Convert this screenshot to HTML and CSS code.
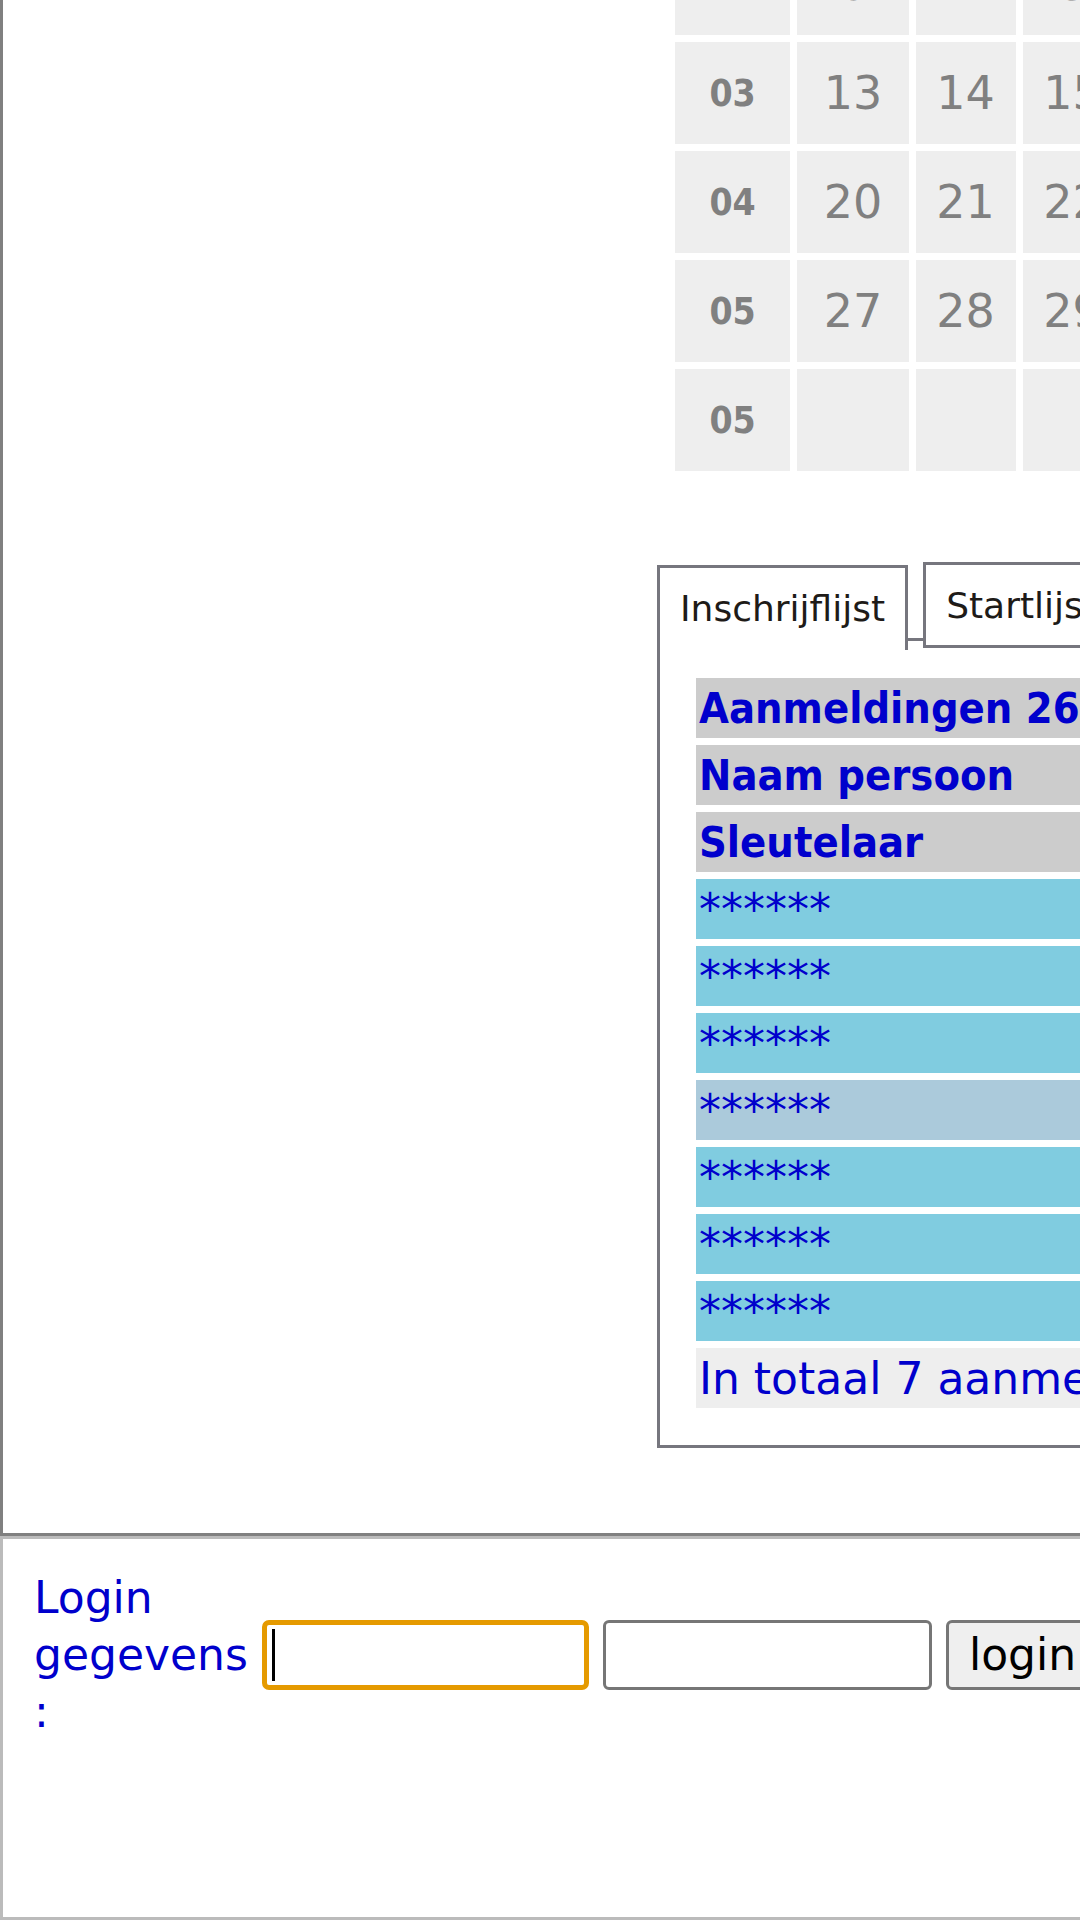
FILE: index.html
```html
<!DOCTYPE html>
<html lang="nl">
<head>
<meta charset="utf-8">
<title>Inschrijflijst</title>
<link rel="stylesheet" href="styles.css">
</head>
<body>
<div class="page">
  <div class="main">
    <div class="side"></div>
    <div class="content">
      <table class="cal">
        <colgroup>
          <col class="c-wk"><col class="c-d1"><col class="c-d"><col class="c-d"><col class="c-d"><col class="c-d"><col class="c-d"><col class="c-d">
        </colgroup>
        <tbody>
          <tr><td class="wk">02</td><td>6</td><td>7</td><td>8</td><td>9</td><td>10</td><td>11</td><td>12</td></tr>
          <tr><td class="wk">03</td><td>13</td><td>14</td><td>15</td><td>16</td><td>17</td><td>18</td><td>19</td></tr>
          <tr><td class="wk">04</td><td>20</td><td>21</td><td>22</td><td>23</td><td>24</td><td>25</td><td>26</td></tr>
          <tr><td class="wk">05</td><td>27</td><td>28</td><td>29</td><td>30</td><td>31</td><td></td><td></td></tr>
          <tr><td class="wk">05</td><td></td><td></td><td></td><td></td><td></td><td></td><td></td></tr>
        </tbody>
      </table>

      <div class="tabbox">
        <div class="tabs">
          <div class="tab active">Inschrijflijst</div>
          <div class="tab">Startlijst</div>
        </div>
        <div class="panel">
          <div class="row head">Aanmeldingen 26</div>
          <div class="row head">Naam persoon</div>
          <div class="row head">Sleutelaar</div>
          <div class="row entry">******</div>
          <div class="row entry">******</div>
          <div class="row entry">******</div>
          <div class="row entry alt">******</div>
          <div class="row entry">******</div>
          <div class="row entry">******</div>
          <div class="row entry">******</div>
          <div class="row total">In totaal 7 aanmeldingen</div>
        </div>
      </div>
    </div>
  </div>

  <div class="login">
    <form class="login-row">
      <div class="lbl">Login gegevens :</div>
      <div class="field">
        <input class="inp focus" type="text" aria-label="gebruikersnaam">
        <span class="caret"></span>
      </div>
      <input class="inp second" type="password" aria-label="wachtwoord">
      <button class="btn" type="button">login</button>
    </form>
  </div>
</div>
</body>
</html>
```

FILE: styles.css
```css
html, body {
  margin: 0;
  padding: 0;
  overflow: hidden;
  background: #fff;
}

body {
  font-family: "DejaVu Sans", Verdana, sans-serif;
  width: 1080px;
  height: 1920px;
}

.page {
  display: flex;
  flex-direction: column;
  width: 1500px;
  height: 1920px;
}

/* ---------- top area ---------- */
.main {
  flex: none;
  display: flex;
  height: 1536px;
  box-sizing: border-box;
  border-left: 3px solid #808080;
  border-bottom: 3px solid #808080;
}

.side {
  flex: none;
  width: 654px;
}

.content {
  flex: 1;
  display: flex;
  flex-direction: column;
  align-items: flex-start;
}

/* calendar */
.cal {
  margin-top: -74px;
  margin-left: 11px;
  border-collapse: separate;
  border-spacing: 7px;
}

.c-wk { width: 117px; }
.c-d1 { width: 113px; }
.c-d { width: 101px; }

.cal td {
  height: 102px;
  padding: 0;
  background: #eeeeee;
  color: #808080;
  font-size: 46px;
  text-align: center;
  vertical-align: middle;
}

.cal td.wk {
  font-family: "DejaVu Sans Condensed", "DejaVu Sans", sans-serif;
  font-stretch: condensed;
  font-weight: bold;
  font-size: 37px;
}

/* tabs */
.tabbox {
  margin-top: 84px;
  width: 900px;
}

.tabs {
  position: relative;
  z-index: 1;
  display: flex;
  align-items: flex-start;
  gap: 15px;
  margin-bottom: -12px;
}

.tab {
  background: #fff;
  border: 3px solid #76767e;
  color: #1e1b18;
  font-size: 36px;
  line-height: 42px;
  padding: 20px 20px 18px;
  white-space: nowrap;
}

.tab.active {
  margin-top: 3px;
  border-bottom: none;
  padding-bottom: 20px;
}

.panel {
  border: 3px solid #76767e;
  padding: 37px 36px;
  display: flex;
  flex-direction: column;
  gap: 7px;
}

.row {
  height: 60px;
  display: flex;
  align-items: center;
  padding-left: 3px;
  color: #0000cc;
  font-size: 44px;
  white-space: nowrap;
}

.row.head {
  background: #cccccc;
  font-family: "DejaVu Sans Condensed", "DejaVu Sans", sans-serif;
  font-stretch: condensed;
  font-weight: bold;
  font-size: 43px;
}

.row.entry {
  background: #80cce0;
}

.row.entry.alt {
  background: #abcadb;
}

.row.total {
  background: #eeeeee;
}

/* ---------- login area ---------- */
.login {
  flex: 1;
  box-sizing: border-box;
  border: 3px solid #bbbbbb;
  border-right: none;
  padding: 30px 31px;
}

.login-row {
  margin: 0;
  display: flex;
  align-items: center;
  gap: 14px;
}

.lbl {
  width: min-content;
  color: #0000cc;
  font-size: 44px;
  line-height: 57px;
}

.field {
  position: relative;
}

.inp {
  display: block;
  box-sizing: border-box;
  width: 327px;
  height: 70px;
  margin: 0;
  padding: 0 6px;
  border: 3px solid #767676;
  border-radius: 6px;
  background: #fff;
  font: 44px "DejaVu Sans", sans-serif;
  outline: none;
}

.inp.focus {
  border: 5px solid #e59a00;
  border-radius: 7px;
}

.inp.second {
  width: 329px;
}

.caret {
  position: absolute;
  left: 10px;
  top: 9px;
  width: 3px;
  height: 52px;
  background: #000;
}

.btn {
  flex: none;
  box-sizing: border-box;
  height: 70px;
  margin: 0;
  padding: 0 20px;
  border: 3px solid #767676;
  border-radius: 6px;
  background: #efefef;
  color: #000;
  font: 44px "DejaVu Sans", sans-serif;
}
```
